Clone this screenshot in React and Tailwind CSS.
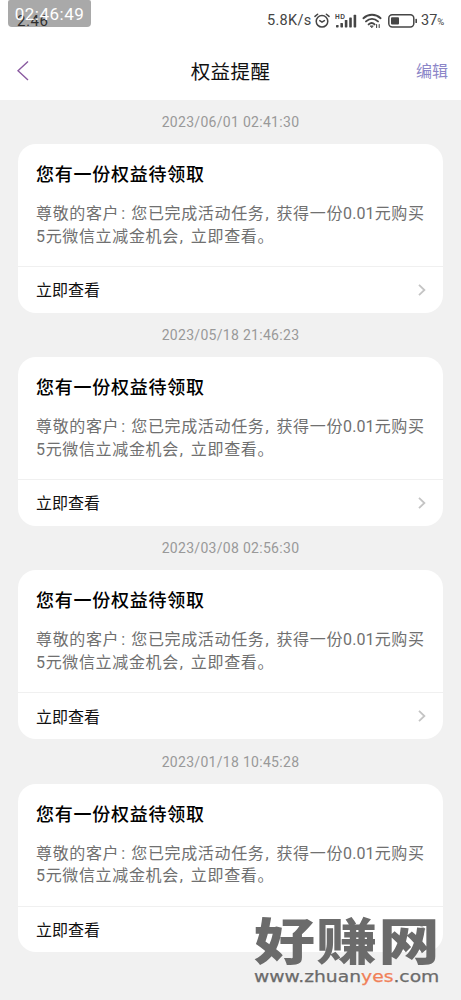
import React from 'react';

const reminders = [
  { id: 1, time: '2023/06/01 02:41:30' },
  { id: 2, time: '2023/05/18 21:46:23' },
  { id: 3, time: '2023/03/08 02:56:30' },
  { id: 4, time: '2023/01/18 10:45:28' },
];

const AlarmIcon = () => (
  <svg className="w-4 h-4" viewBox="0 0 16 16" fill="none" stroke="#454545" strokeWidth="1.5" strokeLinecap="round">
    <circle cx="8" cy="8.3" r="5.8" />
    <path d="M1 3.4 3.6 1.2M15 3.4 12.4 1.2M5.8 7.6 8 9.2l2.4-1.6" />
  </svg>
);

const SignalIcon = () => (
  <svg className="w-[22px] h-4" viewBox="0 0 22 16" fill="#454545">
    <text x="0" y="5.6" fontSize="6.5" fontWeight="700" fontFamily="Liberation Sans, sans-serif" textLength="10">HD</text>
    <rect x="1" y="12" width="2.6" height="2.4" rx=".6" />
    <rect x="5.4" y="10" width="2.6" height="4.4" rx=".6" />
    <rect x="9.8" y="7" width="2.6" height="7.4" rx=".6" />
    <rect x="14.2" y="4.4" width="2.6" height="10" rx=".6" />
    <rect x="18.6" y="1.8" width="2.6" height="12.6" rx=".6" />
  </svg>
);

const WifiIcon = () => (
  <svg className="w-5 h-4" viewBox="0 0 20 16" fill="none" stroke="#454545" strokeWidth="1.9" strokeLinecap="round">
    <path d="M1.4 5.2C6.4.6 13.6.6 18.6 5.2M4 8.4c3.6-3.2 8.4-3.2 12 0M6.6 11.4c2-1.7 4.2-1.7 6 0" />
    <path d="m8.4 13.2 1.4 1.6 1.2-1.6Z" fill="#454545" strokeWidth=".8" />
    <path d="M14.6 11.6v2.8M17.2 14.4v-2.8" strokeWidth="1.1" />
  </svg>
);

const BatteryIcon = () => (
  <svg className="w-[29px] h-[14px]" viewBox="0 0 29 14" fill="none">
    <rect x=".8" y=".8" width="25" height="12.2" rx="3.4" stroke="#454545" strokeWidth="1.5" />
    <rect x="3" y="3.2" width="8" height="7.4" rx="1" fill="#454545" />
    <rect x="27.4" y="4.8" width="1.6" height="4.2" rx=".6" fill="#454545" />
  </svg>
);

const StatusBar = () => (
  <div className="relative h-[42px] shrink-0 text-[#454545]">
    <span className="absolute left-2 top-0 w-[83px] h-[27px] rounded-b rounded-t-xs bg-[#a9a9a9]" />
    <span className="absolute left-[17px] top-[11px] text-[15px] leading-5 tracking-[0.7px] text-[#2e2e2e]">2:46</span>
    <span className="absolute left-2 top-0 w-[83px] text-white text-[17px] leading-[29px] text-center tracking-[0.5px] whitespace-nowrap">
      02:46:49
    </span>
    <div className="flex items-center h-[42px] pl-[267px]">
      <span className="w-[46px] text-[14.5px] tracking-[0.3px] whitespace-nowrap">5.8K/s</span>
      <span className="ml-[1px]"><AlarmIcon /></span>
      <span className="ml-[5px]"><SignalIcon /></span>
      <span className="ml-[5px]"><WifiIcon /></span>
      <span className="ml-[6px]"><BatteryIcon /></span>
      <span className="ml-1 text-[14.5px] whitespace-nowrap">
        37<span className="text-[9.5px]">%</span>
      </span>
    </div>
  </div>
);

const NavBar = () => (
  <div className="flex items-center justify-between h-[58px] pl-[17px] pr-[13px]">
    <svg className="w-[47px] h-5" viewBox="0 0 47 20" fill="none" stroke="#8a5aa0" strokeWidth="1.4">
      <path d="M11 .5 1 9.8 11 19" />
    </svg>
    <h1 className="pt-[3px] text-[19.5px] leading-7 tracking-[0.4px] text-[#111]">权益提醒</h1>
    <button className="w-[51px] pt-0.5 text-right text-[16px] leading-7 text-[#8c86c8]">编辑</button>
  </div>
);

const ReminderCard = ({ time }) => (
  <div className="h-[213.2px]">
    <div className="h-11 text-center text-[14px] leading-11 tracking-[0.3px] text-[#999]">{time}</div>
    <div className="h-[168.5px] rounded-[18px] bg-white flex flex-col">
      <div className="flex-1 px-[18px] pt-[18px]">
        <h2 className="text-[18px] leading-[26px] tracking-[0.75px] font-medium text-black">您有一份权益待领取</h2>
        <p className="mt-[15px] text-[16px] leading-[22.5px] tracking-[0.65px] text-[#707070] whitespace-nowrap">
          尊敬的客户<span className="inline-block w-3 pl-[2px]">:</span>您已完成活动任务
          <span className="inline-block w-3 pl-[1px]">,</span>获得一份<span className="tracking-[0.1px]">0.01</span>元购买
          <br />
          5元微信立减金机会<span className="inline-block w-3 pl-[1px]">,</span>立即查看。
        </p>
      </div>
      <div className="flex items-center justify-between h-[46.5px] pl-[18px] pr-[17px] border-t-[1.5px] border-[#f0f0f0]">
        <span className="pt-[3px] text-[16px] leading-6 text-[#111]">立即查看</span>
        <svg className="w-2 h-3" viewBox="0 0 8 12" fill="none" stroke="#c4c4c4" strokeWidth="1.8">
          <path d="M1 .8 6.4 6 1 11.2" />
        </svg>
      </div>
    </div>
  </div>
);

const Watermark = () => (
  <div className="absolute left-[254px] top-[918px] w-[186px] text-[#6b6b6b]">
    <div className="h-[50px] origin-left scale-x-[1.22] text-[50px] leading-[50px] font-black tracking-[1px] whitespace-nowrap">
      好赚网
    </div>
    <div className="mt-px h-4 origin-left scale-x-[1.17] font-['DejaVu_Sans'] text-[16px] leading-4 [-webkit-text-stroke:0.25px] whitespace-nowrap">
      www.zhuan<span className="text-[#f08058]">yes</span>.com
    </div>
  </div>
);

export default function App() {
  return (
    <div className="relative w-[461px] h-[1000px] overflow-hidden bg-[#f1f1f1] font-['Roboto','Noto_Sans_CJK_SC',sans-serif]">
      <header className="bg-white">
        <StatusBar />
        <NavBar />
      </header>
      <main className="px-[18px]">
        {reminders.map((item) => (
          <ReminderCard key={item.id} time={item.time} />
        ))}
      </main>
      <Watermark />
    </div>
  );
}
